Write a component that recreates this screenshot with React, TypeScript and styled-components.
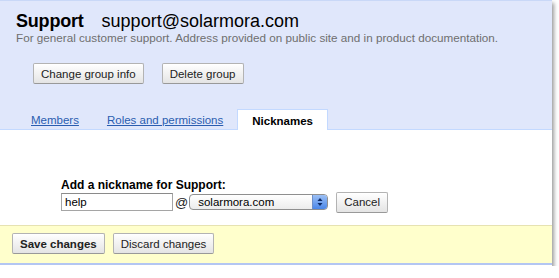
import React from 'react';
import styled, {createGlobalStyle} from "styled-components";

const GlobalStyle = createGlobalStyle`
  html, body {
    margin: 0;
    padding: 0;
    background: #ffffff;
  }
  body {
    font-family: "Liberation Sans", Arial, sans-serif;
  }
`

const Panel = styled.div`
  width: 552px;
  background: #ffffff;
  padding-bottom: 1px;
  box-shadow: 2px 3px 4px rgba(0, 0, 0, 0.4);
`

const Header = styled.div`
  background: #e0e7fb;
  border-top: 1px solid #c9d8f7;
  padding: 10px 0 0 0;
`

const TitleRow = styled.div`
  display: flex;
  align-items: baseline;
  gap: 18px;
  padding-left: 16px;
  height: 20px;
  line-height: 20px;
  font-size: 18px;
  color: #000;
`

const GroupName = styled.span`
  font-weight: bold;
  letter-spacing: -0.2px;
`

const Description = styled.div`
  padding-left: 16px;
  font-size: 11.7px;
  line-height: 14px;
  color: #6f6f6f;
`

const ButtonRow = styled.div`
  display: flex;
  gap: 18px;
  padding-left: 33px;
  margin-top: 18px;
`

const Button = styled.button<{ primary?: boolean }>`
  height: 21px;
  padding: 0 7px;
  font-family: "Liberation Sans", Arial, sans-serif;
  font-size: 11.5px;
  font-weight: ${({primary}) => primary ? 'bold' : 'normal'};
  color: #222;
  background: linear-gradient(#ffffff, #e4e4e4);
  border: 1px solid #b3b3b3;
  border-bottom-color: #999;
  border-radius: 2px;
  box-shadow: inset 0 1px 0 #fff;
  cursor: pointer;
`

const TabBar = styled.div`
  display: flex;
  align-items: flex-end;
  margin-top: 25px;
  padding-left: 17px;
  border-bottom: 1px solid #c3d9ff;
`

const Tab = styled.a<{ active?: boolean }>`
  display: block;
  box-sizing: border-box;
  font-size: 11.5px;
  line-height: 14px;
  font-weight: ${({active}) => active ? 'bold' : 'normal'};
  color: ${({active}) => active ? '#000' : '#2a5db0'};
  text-decoration: ${({active}) => active ? 'none' : 'underline'};
  background: ${({active}) => active ? '#fff' : 'transparent'};
  border: ${({active}) => active ? '1px solid #c3d9ff' : 'none'};
  border-bottom: none;
  margin-bottom: ${({active}) => active ? '-1px' : '0'};
  height: ${({active}) => active ? '21px' : '19px'};
  padding: ${({active}) => active ? '4px 14px 0' : '3px 14px 0'};
`

const Content = styled.div`
  padding: 48px 0 13px 61px;
`

const Label = styled.div`
  font-size: 12px;
  line-height: 14px;
  font-weight: bold;
  color: #000;
`

const NicknameRow = styled.div`
  display: flex;
  align-items: center;
  height: 20px;
`

const TextInput = styled.input`
  width: 112px;
  height: 18px;
  box-sizing: border-box;
  padding: 0 3px;
  font-family: "Liberation Sans", Arial, sans-serif;
  font-size: 11.5px;
  color: #000;
  border: 1px solid #a5a5a5;
  border-top-color: #8a8a8a;
  outline: none;
`

const At = styled.span`
  font-size: 13px;
  margin: 0 1px 0 2px;
  color: #222;
`

const SelectBox = styled.div`
  display: flex;
  align-items: center;
  justify-content: space-between;
  width: 139px;
  height: 16px;
  box-sizing: border-box;
  padding-left: 8px;
  border: 1px solid #8f8f8f;
  border-radius: 4px;
  background: linear-gradient(#ffffff, #ececec);
  font-size: 11.5px;
  color: #000;
  overflow: hidden;
`

const Stepper = styled.span`
  display: flex;
  align-items: center;
  justify-content: center;
  width: 14px;
  height: 100%;
  background: linear-gradient(#9cc0f5, #4a86e8);
  border-left: 1px solid #6d8fc9;
`

const CancelButton = styled(Button)`
  margin-left: 8px;
  height: 21px;
  padding: 0 7px;
`

const Footer = styled.div`
  display: flex;
  gap: 8px;
  padding: 7px 12px 9px;
  background: #ffffcc;
  border-top: 1px solid #e6e2b2;
  border-bottom: 2px solid #b3c6f2;
`

function SelectArrows() {
    return (
        <svg width="6" height="10" viewBox="0 0 6 10">
            <path d="M3 1 L5.5 4 L0.5 4 Z" fill="#0d2a66"/>
            <path d="M3 9 L5.5 6 L0.5 6 Z" fill="#0d2a66"/>
        </svg>
    )
}

function App() {
    return (
        <>
            <GlobalStyle/>
            <Panel>
                <Header>
                    <TitleRow>
                        <GroupName>Support</GroupName>
                        <span>support@solarmora.com</span>
                    </TitleRow>
                    <Description>
                        For general customer support. Address provided on public site and in product documentation.
                    </Description>
                    <ButtonRow>
                        <Button>Change group info</Button>
                        <Button>Delete group</Button>
                    </ButtonRow>
                    <TabBar>
                        <Tab href="#">Members</Tab>
                        <Tab href="#">Roles and permissions</Tab>
                        <Tab active>Nicknames</Tab>
                    </TabBar>
                </Header>
                <Content>
                    <Label>Add a nickname for Support:</Label>
                    <NicknameRow>
                        <TextInput defaultValue="help"/>
                        <At>@</At>
                        <SelectBox>
                            <span>solarmora.com</span>
                            <Stepper><SelectArrows/></Stepper>
                        </SelectBox>
                        <CancelButton>Cancel</CancelButton>
                    </NicknameRow>
                </Content>
                <Footer>
                    <Button primary>Save changes</Button>
                    <Button>Discard changes</Button>
                </Footer>
            </Panel>
        </>
    );
}

export default App;
